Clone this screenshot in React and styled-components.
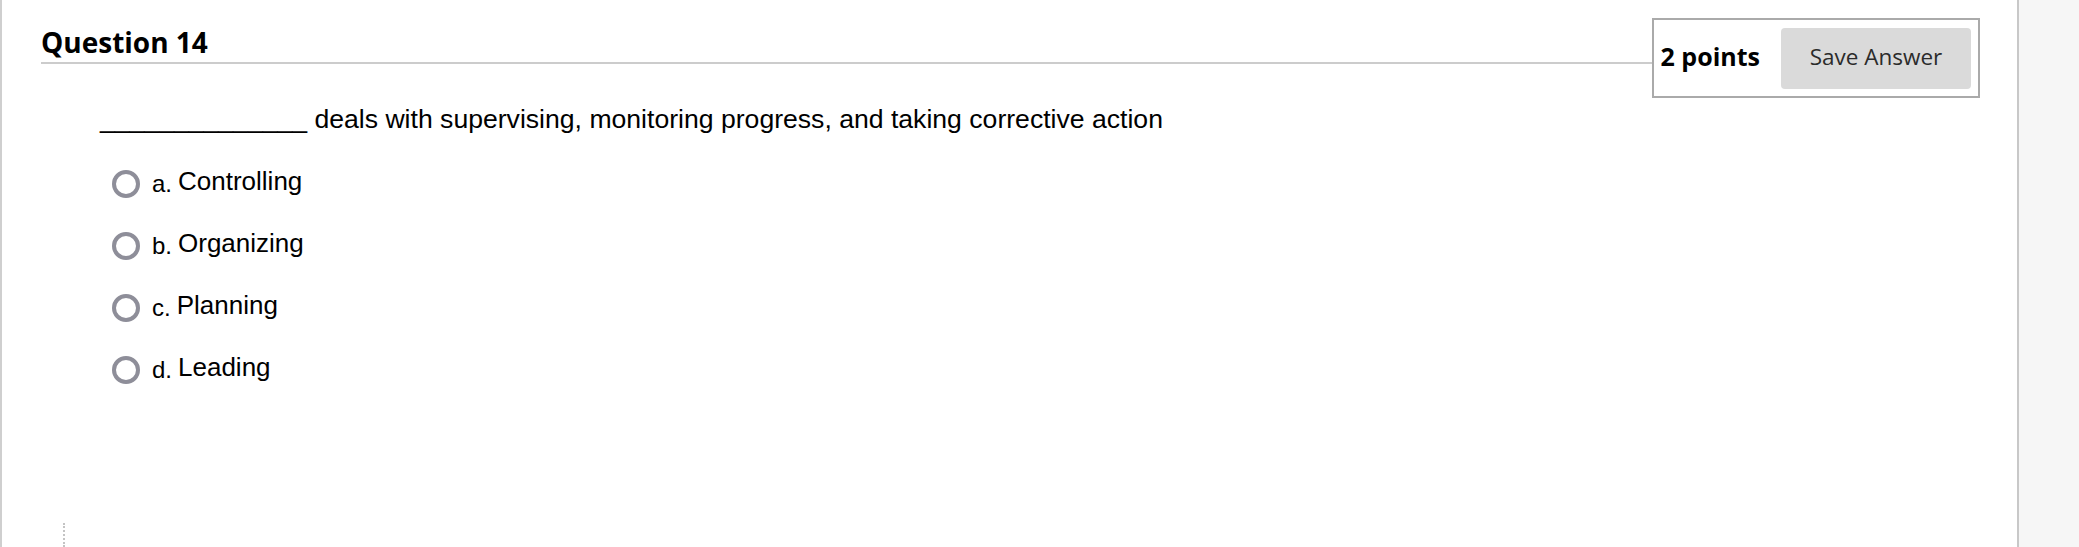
import styled, { createGlobalStyle } from "styled-components";

const GlobalStyle = createGlobalStyle`
  html, body {
    margin: 0;
    padding: 0;
    background: #fff;
  }
  * {
    box-sizing: border-box;
  }
`;

const Shell = styled.div`
  display: flex;
  min-height: 100vh;
  height: 547px;
  overflow: hidden;
`;

const Main = styled.main`
  flex: 1;
  display: flex;
  flex-direction: column;
  border-left: 2px solid #cfcfcf;
  padding: 18px 37px 0 39px;
`;

const Sidebar = styled.aside`
  width: 62px;
  border-left: 2px solid #c8c8c8;
  background: #f6f6f6;
`;

const HeaderRow = styled.div`
  display: flex;
  align-items: flex-start;
`;

const TitleWrap = styled.div`
  flex: 1;
  padding-top: 5px;
  border-bottom: 2px solid #cccccc;
`;

const Title = styled.h2`
  margin: 0;
  font-family: "Open Sans", sans-serif;
  font-weight: 700;
  font-size: 28px;
  line-height: 39px;
  color: #000;
`;

const PointsBox = styled.div`
  display: flex;
  align-items: center;
  gap: 21px;
  padding: 8px 7px 7px 7px;
  border: 2px solid #aaaaaa;
  background: #fff;
`;

const Points = styled.span`
  margin-bottom: 5px;
  font-family: "Open Sans", sans-serif;
  font-weight: 700;
  font-size: 25px;
  color: #000;
  white-space: nowrap;
`;

const SaveButton = styled.button`
  width: 190px;
  height: 61px;
  padding: 0 0 5px;
  border: none;
  border-radius: 4px;
  background: #dadada;
  color: #2b2b2b;
  font-family: "Open Sans", sans-serif;
  font-size: 22.5px;
  cursor: pointer;
`;

const QuestionText = styled.p`
  margin: 6px 0 0 59px;
  font-family: "Liberation Sans", Arial, sans-serif;
  font-size: 26.6px;
  line-height: 31px;
  color: #000;
`;

const Options = styled.ul`
  list-style: none;
  margin: 18px 0 0 71px;
  padding: 0;
`;

const OptionRow = styled.li`
  display: flex;
  align-items: center;
  height: 62px;
`;

const Radio = styled.span`
  width: 28px;
  height: 28px;
  border: 4px solid #8e8e99;
  border-radius: 50%;
  flex-shrink: 0;
`;

const Letter = styled.span`
  margin: 0 6px 1px 12px;
  font-family: "Liberation Sans", Arial, sans-serif;
  font-size: 24px;
  line-height: 28px;
  color: #000;
`;

const Answer = styled.span`
  margin-bottom: 7px;
  font-family: "Liberation Sans", Arial, sans-serif;
  font-size: 26px;
  line-height: 30px;
  color: #000;
`;

const Footer = styled.div`
  margin-top: auto;
  margin-left: 22px;
  width: 2px;
  height: 24px;
  border-left: 2px dotted #c4c4c4;
`;

const options = [
  { letter: "a.", text: "Controlling" },
  { letter: "b.", text: "Organizing" },
  { letter: "c.", text: "Planning" },
  { letter: "d.", text: "Leading" },
];

const App = () => {
  return (
    <>
      <GlobalStyle />
      <Shell>
        <Main>
          <HeaderRow>
            <TitleWrap>
              <Title>Question 14</Title>
            </TitleWrap>
            <PointsBox>
              <Points>2 points</Points>
              <SaveButton>Save Answer</SaveButton>
            </PointsBox>
          </HeaderRow>
          <QuestionText>
            ______________ deals with supervising, monitoring progress, and taking corrective action
          </QuestionText>
          <Options>
            {options.map((opt) => (
              <OptionRow key={opt.letter}>
                <Radio />
                <Letter>{opt.letter}</Letter>
                <Answer>{opt.text}</Answer>
              </OptionRow>
            ))}
          </Options>
          <Footer />
        </Main>
        <Sidebar />
      </Shell>
    </>
  );
};

export default App;
